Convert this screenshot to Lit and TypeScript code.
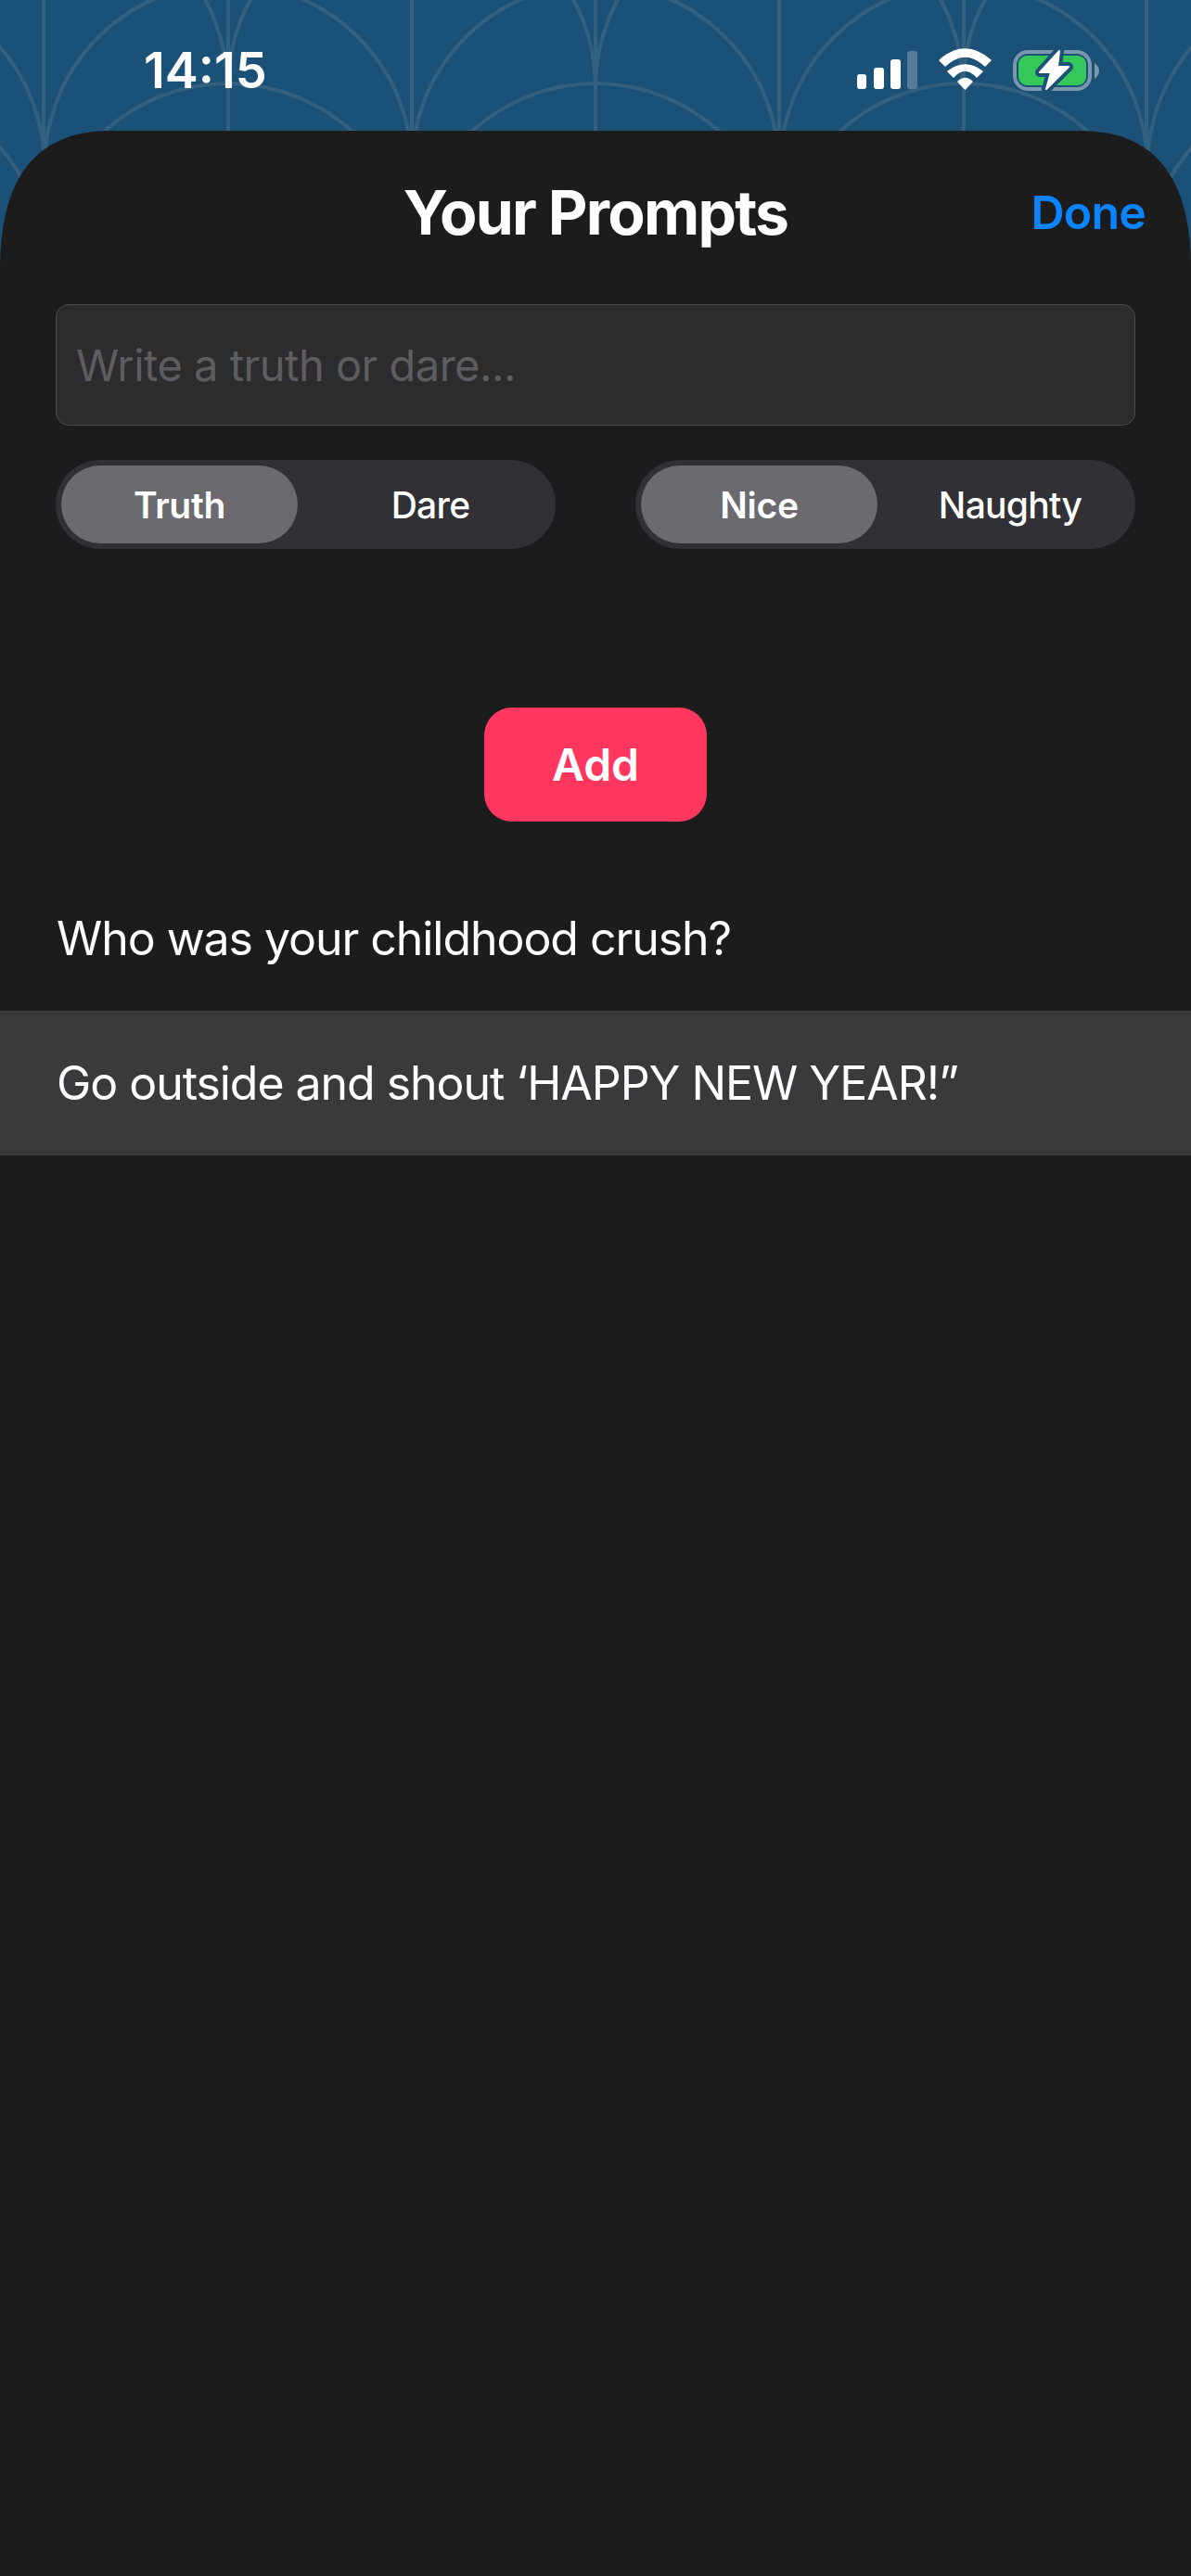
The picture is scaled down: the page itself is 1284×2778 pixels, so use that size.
import { LitElement, html, css, svg } from "lit";
import { customElement } from "lit/decorators.js";

const upper = [-150, 246, 642, 1039, 1435];
const lower = [47, 444, 840, 1236];
const verticals = [47, 246, 444, 642, 840, 1039, 1236];
const bolt = "M1143 55 L1122 78 L1134 78 L1129 96 L1153 72 L1141 72 Z";
const arch = (cx: number, cy: number) => `M${cx - 198} ${cy} A198 198 0 0 1 ${cx + 198} ${cy}`;

@customElement("app-root")
export class AppRoot extends LitElement {
  static styles = css`
    :host {
      display: block;
      position: relative;
      width: 1284px;
      height: 2778px;
      overflow: hidden;
      background: #1c5177;
      font-family: Inter, "Liberation Sans", sans-serif;
      color: #fff;
    }
    .pattern { position: absolute; left: 0; top: 0; }
    .pattern path, .pattern line { fill: none; stroke: #34607f; stroke-width: 4; }
    .status {
      position: relative;
      height: 141px;
      box-sizing: border-box;
      padding: 46px 98px 0 155px;
      display: flex;
      justify-content: space-between;
    }
    .time { font-size: 54px; font-weight: 600; line-height: 60px; }
    .icons { display: flex; align-items: flex-start; padding-top: 6px; }
    .sheet {
      position: relative;
      height: 2637px;
      background: #1c1c1c;
      clip-path: path("M0 150 C0 55 35 0 120 0 L1164 0 C1249 0 1284 55 1284 150 L1284 2637 L0 2637 Z");
      display: flex;
      flex-direction: column;
    }
    .header {
      height: 176px;
      display: grid;
      grid-template-columns: 1fr auto 1fr;
      align-items: center;
      padding: 0 49px;
      margin-bottom: 11px;
    }
    .title { font-size: 66px; font-weight: 700; letter-spacing: -1.8px; }
    .done { justify-self: end; font-size: 50px; font-weight: 600; color: #0a84ff; letter-spacing: -0.8px; }
    .input {
      height: 131px;
      margin: 0 60px;
      box-sizing: border-box;
      display: flex;
      align-items: center;
      padding: 0 21px;
      background: #2c2c2c;
      border: 1.5px solid #4b4b4c;
      border-radius: 14px;
      color: #5d5d60;
      font-size: 47px;
      letter-spacing: -0.5px;
    }
    .segments {
      margin: 37px 60px 0;
      display: flex;
      justify-content: space-between;
    }
    .seg {
      width: 539px;
      height: 96px;
      box-sizing: border-box;
      padding: 6px;
      background: #303035;
      border-radius: 48px;
      display: grid;
      grid-template-columns: 255px 1fr;
      font-size: 39px;
      letter-spacing: -0.7px;
    }
    .opt { display: flex; align-items: center; justify-content: center; padding-left: 14px; font-weight: 500; }
    .opt.on { background: #6a6a6f; border-radius: 42px; font-weight: 600; padding-left: 0; letter-spacing: -0.3px; }
    .add {
      align-self: center;
      margin-top: 171px;
      width: 240px;
      height: 123px;
      background: #ff375f;
      border-radius: 30px;
      display: flex;
      align-items: center;
      justify-content: center;
      font-size: 48px;
      font-weight: 600;
    }
    .list { margin-top: 48px; }
    .row {
      height: 156px;
      display: flex;
      align-items: center;
      padding-left: 61px;
      font-size: 50px;
      letter-spacing: -1.05px;
    }
    .row.sel { background: #3a3a3c; }
  `;

  private pattern() {
    return html`<svg class="pattern" width="1284" height="300" viewBox="0 0 1284 300">
      ${upper.map((x) => svg`<path d=${arch(x, 180)}></path>`)}
      ${upper.map((x) => svg`<path d=${arch(x, 288)}></path>`)}
      ${lower.map((x) => svg`<path d=${arch(x, 94)}></path>`)}
      ${verticals.map((x) => svg`<line x1=${x} y1="0" x2=${x} y2="180"></line>`)}
    </svg>`;
  }

  private statusIcons() {
    return html`<svg width="262" height="48" viewBox="925 52 262 48">
      <rect x="925" y="80" width="10" height="16" rx="3" fill="#fff"></rect>
      <rect x="943" y="73" width="11" height="23" rx="3" fill="#fff"></rect>
      <rect x="961" y="64" width="11" height="32" rx="3" fill="#fff"></rect>
      <rect x="979" y="55" width="11" height="41" rx="3" fill="#fff" fill-opacity="0.25"></rect>
      <g fill="#fff" stroke="#fff" stroke-width="1.5" stroke-linejoin="round">
        <path d="M1014 65 Q1041.5 41 1069 65 L1063 71 Q1041.5 51 1020 71 Z"></path>
        <path d="M1023 77 Q1041.5 63 1060 77 L1054 83 Q1041.5 69 1029 83 Z"></path>
        <path d="M1034 88 Q1041.5 81 1049 88 L1041.5 96 Z"></path>
      </g>
      <rect x="1095" y="56" width="81" height="40" rx="14" fill="none" stroke="#7b97ae" stroke-width="4"></rect>
      <rect x="1099" y="60" width="73" height="32" rx="9" fill="#34c759"></rect>
      <path d="M1181 68 C1184 70 1186 73 1186 76 C1186 80 1184 83 1181 85 Z" fill="#7b97ae"></path>
      <path d=${bolt} fill="#1c5177" stroke="#1c5177" stroke-width="10" stroke-linejoin="round"></path>
      <path d=${bolt} fill="#fff" stroke="#fff" stroke-width="2" stroke-linejoin="round"></path>
    </svg>`;
  }

  render() {
    return html`
      ${this.pattern()}
      <div class="status">
        <div class="time">14:15</div>
        <div class="icons">${this.statusIcons()}</div>
      </div>
      <div class="sheet">
        <div class="header">
          <span></span>
          <div class="title">Your Prompts</div>
          <div class="done">Done</div>
        </div>
        <div class="input">Write a truth or dare...</div>
        <div class="segments">
          <div class="seg"><div class="opt on">Truth</div><div class="opt">Dare</div></div>
          <div class="seg"><div class="opt on">Nice</div><div class="opt">Naughty</div></div>
        </div>
        <div class="add">Add</div>
        <div class="list">
          <div class="row">Who was your childhood crush?</div>
          <div class="row sel">Go outside and shout ‘HAPPY NEW YEAR!”</div>
        </div>
      </div>
    `;
  }
}
